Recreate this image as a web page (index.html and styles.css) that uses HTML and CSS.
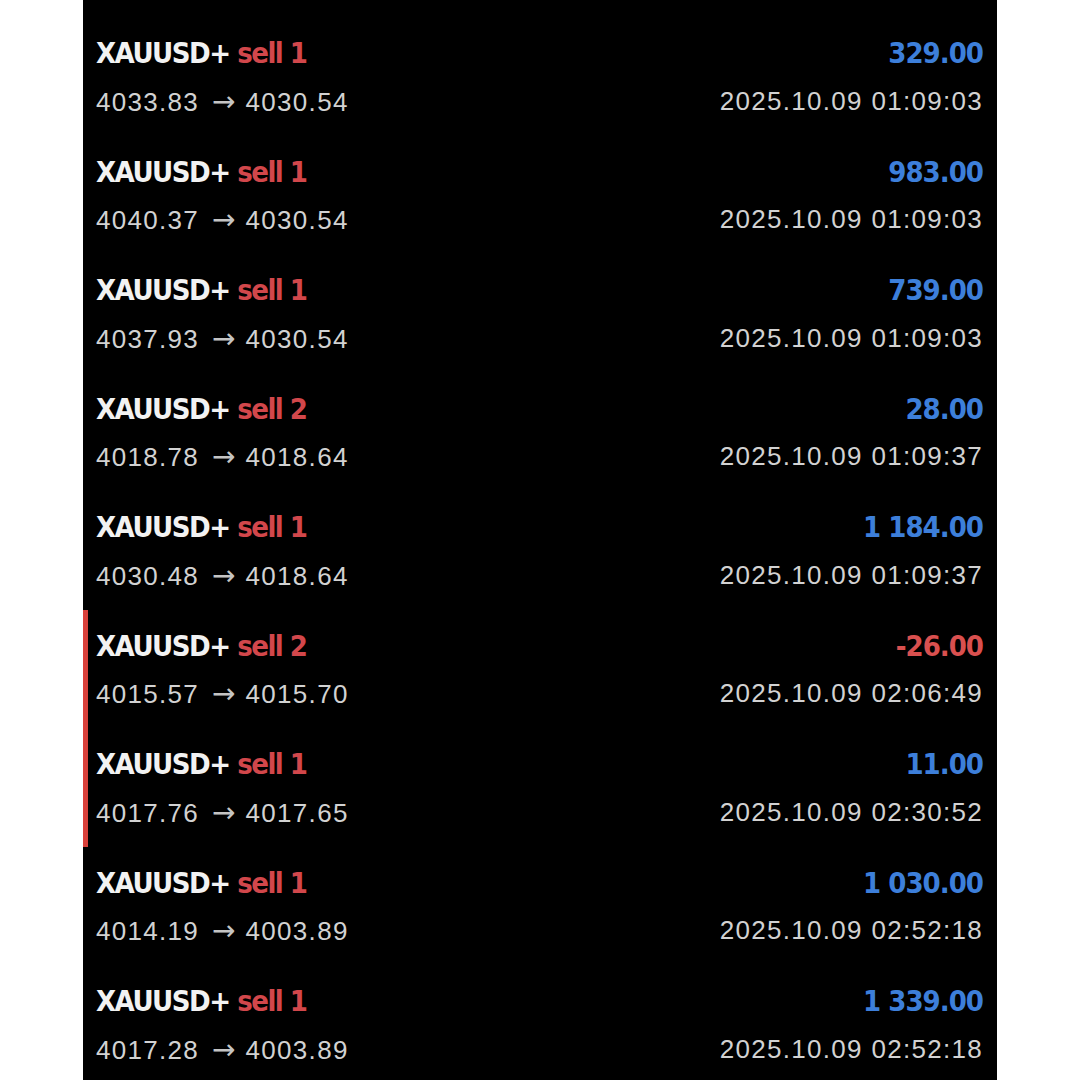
FILE: index.html
```html
<!DOCTYPE html>
<html>
<head>
<meta charset="utf-8">
<link rel="stylesheet" href="styles.css">
</head>
<body>
<div class="panel">
  <div class="list">
    <div class="row">
      <div class="line"><span class="sym">XAUUSD+ <span class="side">sell 1</span></span><span class="amt pos">410.00</span></div>
      <div class="line sub"><span>4034.64<span class="arr">→</span>4030.54</span><span>2025.10.09 01:09:03</span></div>
    </div>
    <div class="row">
      <div class="line"><span class="sym">XAUUSD+ <span class="side">sell 1</span></span><span class="amt pos">329.00</span></div>
      <div class="line sub"><span>4033.83<span class="arr">→</span>4030.54</span><span>2025.10.09 01:09:03</span></div>
    </div>
    <div class="row">
      <div class="line"><span class="sym">XAUUSD+ <span class="side">sell 1</span></span><span class="amt pos">983.00</span></div>
      <div class="line sub"><span>4040.37<span class="arr">→</span>4030.54</span><span>2025.10.09 01:09:03</span></div>
    </div>
    <div class="row">
      <div class="line"><span class="sym">XAUUSD+ <span class="side">sell 1</span></span><span class="amt pos">739.00</span></div>
      <div class="line sub"><span>4037.93<span class="arr">→</span>4030.54</span><span>2025.10.09 01:09:03</span></div>
    </div>
    <div class="row">
      <div class="line"><span class="sym">XAUUSD+ <span class="side">sell 2</span></span><span class="amt pos">28.00</span></div>
      <div class="line sub"><span>4018.78<span class="arr">→</span>4018.64</span><span>2025.10.09 01:09:37</span></div>
    </div>
    <div class="row">
      <div class="line"><span class="sym">XAUUSD+ <span class="side">sell 1</span></span><span class="amt pos">1 184.00</span></div>
      <div class="line sub"><span>4030.48<span class="arr">→</span>4018.64</span><span>2025.10.09 01:09:37</span></div>
    </div>
    <div class="row flag">
      <div class="line"><span class="sym">XAUUSD+ <span class="side">sell 2</span></span><span class="amt neg">-26.00</span></div>
      <div class="line sub"><span>4015.57<span class="arr">→</span>4015.70</span><span>2025.10.09 02:06:49</span></div>
    </div>
    <div class="row flag">
      <div class="line"><span class="sym">XAUUSD+ <span class="side">sell 1</span></span><span class="amt pos">11.00</span></div>
      <div class="line sub"><span>4017.76<span class="arr">→</span>4017.65</span><span>2025.10.09 02:30:52</span></div>
    </div>
    <div class="row">
      <div class="line"><span class="sym">XAUUSD+ <span class="side">sell 1</span></span><span class="amt pos">1 030.00</span></div>
      <div class="line sub"><span>4014.19<span class="arr">→</span>4003.89</span><span>2025.10.09 02:52:18</span></div>
    </div>
    <div class="row">
      <div class="line"><span class="sym">XAUUSD+ <span class="side">sell 1</span></span><span class="amt pos">1 339.00</span></div>
      <div class="line sub"><span>4017.28<span class="arr">→</span>4003.89</span><span>2025.10.09 02:52:18</span></div>
    </div>
  </div>
</div>
</body>
</html>
```

FILE: styles.css
```css
html, body {
  margin: 0;
  padding: 0;
  background: #ffffff;
}
body {
  width: 1080px;
  height: 1080px;
  overflow: hidden;
}
.panel {
  margin-left: 83px;
  width: 914px;
  height: 1080px;
  background: #000000;
  overflow: hidden;
}
.list {
  margin-top: -101.5px;
  display: flex;
  flex-direction: column;
}
.row {
  box-sizing: border-box;
  height: 118.5px;
  padding: 14px 14px 0 13px;
  display: flex;
  flex-direction: column;
}
.row.flag {
  border-left: 5px solid #d8403a;
  padding-left: 8px;
}
.line {
  display: flex;
  justify-content: space-between;
  align-items: center;
  height: 44px;
  font-family: "Liberation Sans Narrow", "DejaVu Sans Condensed", "Roboto", sans-serif;
  font-weight: bold;
  font-size: 29px;
  letter-spacing: -1.5px;
  color: #f2f2f2;
}
.sym {
  white-space: pre;
}
.side {
  color: #d2474b;
}
.amt {
  letter-spacing: -1px;
}
.amt.pos {
  color: #3d7fda;
}
.amt.neg {
  color: #d9504f;
}
.line.sub {
  height: 52px;
  font-family: "Liberation Sans", Arial, sans-serif;
  font-weight: normal;
  font-size: 26px;
  letter-spacing: 1.3px;
  color: #d2d2d2;
}
.arr {
  display: inline-block;
  margin: 0 10px 0 13px;
  font-family: "DejaVu Sans", sans-serif;
  font-size: 28px;
  font-weight: normal;
  letter-spacing: 0;
  color: #c4c4c4;
}
```
